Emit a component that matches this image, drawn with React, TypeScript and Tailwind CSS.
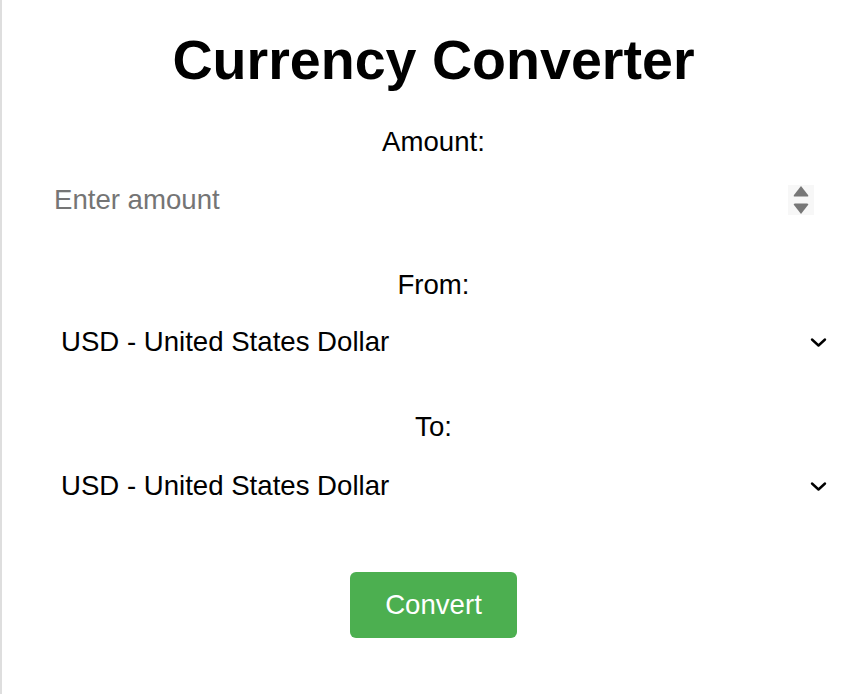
import React, { useState } from "react";

const currencies = [
  { code: "USD", name: "United States Dollar" },
  { code: "EUR", name: "Euro" },
  { code: "GBP", name: "British Pound" },
  { code: "JPY", name: "Japanese Yen" },
  { code: "INR", name: "Indian Rupee" },
];

const Chevron = () => (
  <svg width="17" height="11" viewBox="0 0 17 11" className="shrink-0">
    <path d="M2 2.5 L8.5 8.5 L15 2.5" fill="none" stroke="#000" strokeWidth="2.4" strokeLinecap="round" strokeLinejoin="round" />
  </svg>
);

const Spinner = () => (
  <svg width="26" height="30" viewBox="0 0 26 30" className="shrink-0">
    <rect x="0" y="0" width="26" height="30" fill="#f7f7f7" />
    <path d="M13 1 L20 10 Q21 11.5 19 11.5 L7 11.5 Q5 11.5 6 10 Z" fill="#777" />
    <path d="M13 29 L20 20 Q21 18.5 19 18.5 L7 18.5 Q5 18.5 6 20 Z" fill="#777" />
  </svg>
);

function CurrencySelect({ value, onChange }: { value: string; onChange: (v: string) => void }) {
  return (
    <div className="flex items-center pl-[59px] pr-[38px] h-[32px]">
      <select
        value={value}
        onChange={(e) => onChange(e.target.value)}
        className="flex-1 appearance-none bg-transparent outline-none text-[27.6px] leading-[32px] text-black p-0"
      >
        {currencies.map((c) => (
          <option key={c.code} value={c.code}>
            {c.code} - {c.name}
          </option>
        ))}
      </select>
      <Chevron />
    </div>
  );
}

export default function App() {
  const [amount, setAmount] = useState("");
  const [from, setFrom] = useState("USD");
  const [to, setTo] = useState("USD");

  return (
    <div className="min-h-[694px] w-full border-l-2 border-[#dedede] bg-white font-['Liberation_Sans',Arial,sans-serif] text-black">
      <h1 className="pt-[28px] text-center text-[55.6px] leading-[64px] font-bold">Currency Converter</h1>

      {/* amount */}
      <label className="mt-[34px] block text-center text-[27.6px] leading-[32px]">Amount:</label>
      <div className="mt-[26px] flex items-center pl-[52px] pr-[51px] h-[32px]">
        <input
          type="number"
          value={amount}
          onChange={(e) => setAmount(e.target.value)}
          placeholder="Enter amount"
          className="flex-1 bg-transparent outline-none text-[27.6px] leading-[32px] placeholder:text-[#757575] [appearance:textfield] [&::-webkit-inner-spin-button]:appearance-none"
        />
        <Spinner />
      </div>

      {/* from */}
      <label className="mt-[53px] block text-center text-[27.6px] leading-[32px]">From:</label>
      <div className="mt-[25px]">
        <CurrencySelect value={from} onChange={setFrom} />
      </div>

      {/* to */}
      <label className="mt-[53px] block text-center text-[27.6px] leading-[32px]">To:</label>
      <div className="mt-[27px]">
        <CurrencySelect value={to} onChange={setTo} />
      </div>

      <div className="mt-[70px] flex justify-center">
        <button className="h-[66px] w-[167px] rounded-[6px] bg-[#4caf50] text-[27.6px] text-white">Convert</button>
      </div>
    </div>
  );
}
